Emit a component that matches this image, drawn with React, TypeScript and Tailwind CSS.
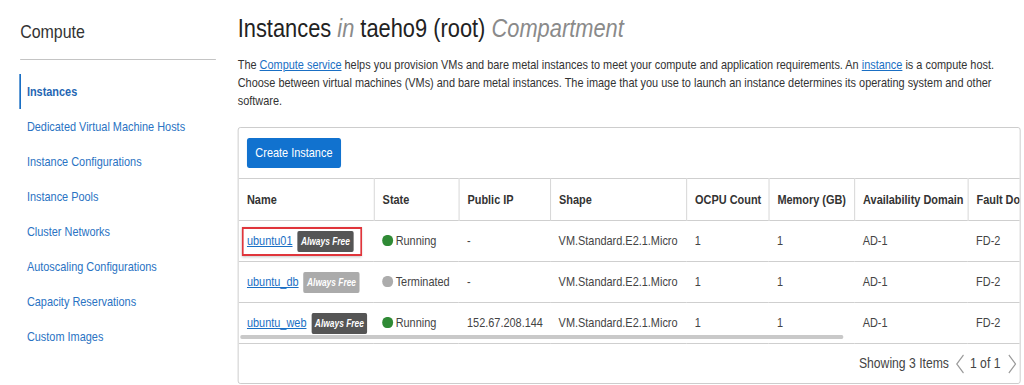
const font = { fontFamily: "'Liberation Sans', Arial, sans-serif" }

// the reference is a horizontally squeezed capture; we lay out at full width
// and squeeze the whole page once with scale-x
const navItems = [
  "Instances",
  "Dedicated Virtual Machine Hosts",
  "Instance Configurations",
  "Instance Pools",
  "Cluster Networks",
  "Autoscaling Configurations",
  "Capacity Reservations",
  "Custom Images",
]

const columns = [
  { label: "Name", w: 161 },
  { label: "State", w: 101 },
  { label: "Public IP", w: 109 },
  { label: "Shape", w: 162 },
  { label: "OCPU Count", w: 98 },
  { label: "Memory (GB)", w: 102 },
  { label: "Availability Domain", w: 135 },
  { label: "Fault Domain", w: 130 },
]

type Row = {
  name: string
  state: "Running" | "Terminated"
  ip: string
  highlight?: boolean
}

const rows: Row[] = [
  { name: "ubuntu01", state: "Running", ip: "-", highlight: true },
  { name: "ubuntu_db", state: "Terminated", ip: "-" },
  { name: "ubuntu_web", state: "Running", ip: "152.67.208.144" },
]

function Badge({ muted }: { muted?: boolean }) {
  return (
    <span
      className={`inline-flex h-[21px] items-center rounded-[2px] px-[4px] text-[10px] font-bold italic text-white ${
        muted ? "bg-[#ababab]" : "bg-[#555555]"
      }`}
    >
      Always Free
    </span>
  )
}

function NameCell({ row }: { row: Row }) {
  const content = (
    <>
      <a className="text-[#1a6fc4] underline">{row.name}</a>
      <Badge muted={row.state === "Terminated"} />
    </>
  )
  if (row.highlight) {
    return (
      <span className="-ml-[6px] inline-flex items-center gap-[6px] border-2 border-[#e0353b] py-[2px] pl-[4px] pr-[8px] shadow-[0_1px_3px_rgba(0,0,0,0.25)]">
        {content}
      </span>
    )
  }
  return <span className="inline-flex items-center gap-[6px]">{content}</span>
}

function Chevron({ dir }: { dir: "left" | "right" }) {
  return (
    <svg width="10" height="20" viewBox="0 0 10 20" fill="none" stroke="#9a9a9a" strokeWidth="1.3">
      {dir === "left" ? <path d="M9 1 L1 10 L9 19" /> : <path d="M1 1 L9 10 L1 19" />}
    </svg>
  )
}

export default function App() {
  return (
    <div className="h-[385px] w-[1024px] overflow-hidden bg-white">
      <div
        className="flex h-[385px] w-[1219px] origin-top-left scale-x-[0.84] text-[#333]"
        style={font}
      >
        <aside className="w-[283px] shrink-0 pl-[24px] pr-[26px] pt-[20px]">
          <h2 className="text-[19px] leading-[24px] text-[#333]">Compute</h2>
          <div className="mt-[15px] border-b border-[#c4c4c4]" />
          <nav className="mt-[14px] flex flex-col">
            {navItems.map((item, i) => (
              <a
                key={item}
                className={`-ml-[1px] flex h-[35px] items-center whitespace-nowrap pl-[7px] text-[13px] ${
                  i === 0
                    ? "border-l-2 border-[#1a6fc4] font-bold text-[#1f66b3]"
                    : "border-l-2 border-transparent text-[#2a73c3]"
                }`}
              >
                {item}
              </a>
            ))}
          </nav>
        </aside>

        <main className="min-w-0 flex-1 pr-[4px] pt-[13px]">
          <h1 className="whitespace-nowrap text-[26px] leading-[30px] text-[#222]">
            Instances <span className="italic text-[#8a8a8a]">in</span> taeho9 (root){" "}
            <span className="italic text-[#8a8a8a]">Compartment</span>
          </h1>
          <p className="mt-[13px] whitespace-nowrap text-[13px] leading-[18px] text-[#333]">
            The <a className="text-[#1a6fc4] underline">Compute service</a> helps you provision VMs and bare metal
            instances to meet your compute and application requirements. An{" "}
            <a className="text-[#1a6fc4] underline">instance</a> is a compute host.
            <br />
            Choose between virtual machines (VMs) and bare metal instances. The image that you use to launch an
            instance determines its operating system and other
            <br />
            software.
          </p>

          <div className="mt-[17px] overflow-hidden rounded-[3px] border border-[#c8c8c8]">
            <div className="px-[10px] py-[10px]">
              <button className="h-[30px] rounded-[3px] bg-[#1172cf] px-[10px] text-[13px] text-white">
                Create Instance
              </button>
            </div>

            <div className="relative overflow-hidden">
              <table className="table-fixed border-collapse text-[13px]" style={{ width: 998 }}>
                <colgroup>
                  {columns.map((c) => (
                    <col key={c.label} style={{ width: c.w }} />
                  ))}
                </colgroup>
                <thead>
                  <tr className="h-[42px] border-y border-[#cfcfcf]">
                    {columns.map((c, i) => (
                      <th
                        key={c.label}
                        className={`whitespace-nowrap px-[10px] text-left font-bold text-[#333] ${
                          i > 0 ? "border-l border-[#cfcfcf]" : ""
                        }`}
                      >
                        {c.label}
                      </th>
                    ))}
                  </tr>
                </thead>
                <tbody>
                  {rows.map((r) => (
                    <tr key={r.name} className="h-[41px] border-b border-[#cfcfcf] text-[#444]">
                      <td className="whitespace-nowrap px-[10px]">
                        <NameCell row={r} />
                      </td>
                      <td className="whitespace-nowrap px-[10px]">
                        <span className="inline-flex items-center gap-[3px]">
                          <span
                            className={`h-[11px] w-[13px] rounded-full ${
                              r.state === "Running" ? "bg-[#2f8a35]" : "bg-[#acacac]"
                            }`}
                          />
                          {r.state}
                        </span>
                      </td>
                      <td className="whitespace-nowrap px-[10px]">{r.ip}</td>
                      <td className="whitespace-nowrap px-[10px]">VM.Standard.E2.1.Micro</td>
                      <td className="px-[10px]">1</td>
                      <td className="px-[10px]">1</td>
                      <td className="px-[10px]">AD-1</td>
                      <td className="px-[10px]">FD-2</td>
                    </tr>
                  ))}
                </tbody>
              </table>
              <div className="absolute bottom-[5px] left-[2px] h-[4px] w-[718px] rounded-full bg-[#c9c9c9]" />
            </div>

            <div className="flex h-[39px] items-center justify-end pr-[4px] text-[14.5px] text-[#444]">
              <span>Showing 3 Items</span>
              <span className="ml-[8px] flex">
                <Chevron dir="left" />
              </span>
              <span className="ml-[7px]">1 of 1</span>
              <span className="ml-[9px] flex">
                <Chevron dir="right" />
              </span>
            </div>
          </div>
        </main>
      </div>
    </div>
  )
}
